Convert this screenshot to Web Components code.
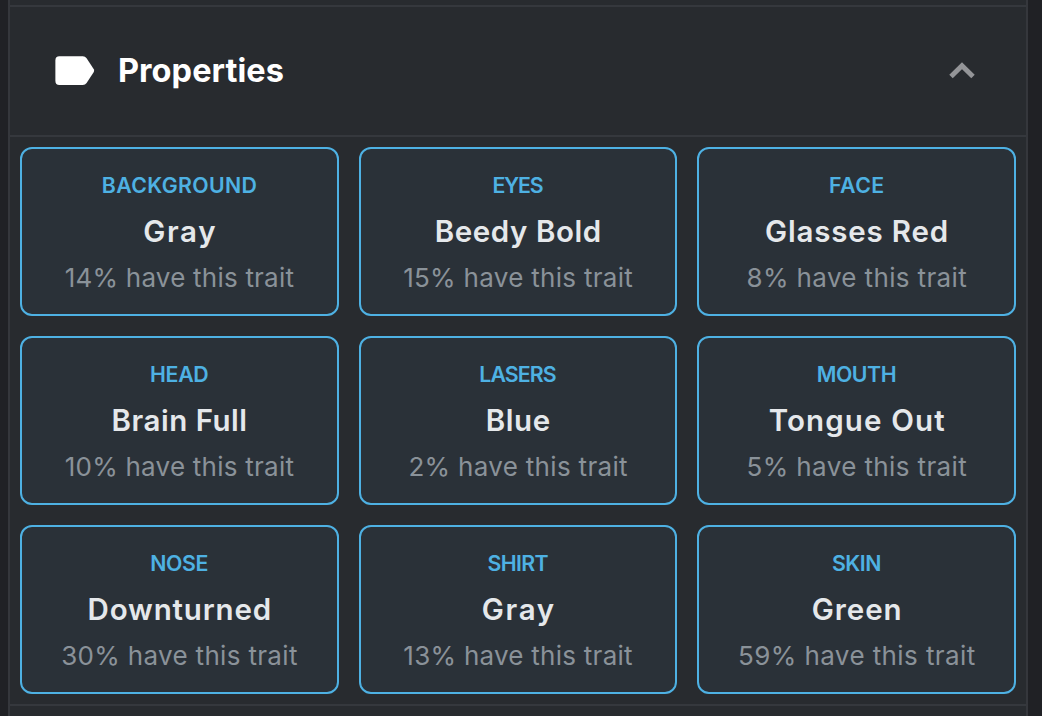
<!DOCTYPE html>
<html lang="en">
<head>
<meta charset="utf-8">
<title>Properties</title>
<style>
html,body{margin:0;height:100%;overflow:hidden;background:#202125}
body{font-family:Inter,"Open Sans",sans-serif}
</style>
</head>
<body>
<property-panel>
  <panel-header slot="header">Properties</panel-header>
</property-panel>
<script>
const attach = (el, html) => { el.attachShadow({mode:'open'}).innerHTML = html; };

// A single line of text tracked to a given advance width.
customElements.define('fit-text', class extends HTMLElement {
  connectedCallback() {
    if (this.shadowRoot) return;
    attach(this, `<style>:host{display:block;white-space:nowrap}span{display:inline-block}</style><span><slot></slot></span>`);
    const span = this.shadowRoot.querySelector('span');
    const n = this.textContent.length;
    const gap = (Number(this.getAttribute('width')) - span.getBoundingClientRect().width) / n;
    span.style.letterSpacing = gap + 'px';
    span.style.marginRight = -gap + 'px';
  }
});

customElements.define('panel-header', class extends HTMLElement {
  connectedCallback() {
    attach(this, `<style>
      :host{display:flex;align-items:center;box-sizing:border-box;height:130px;padding:0 51px 0 45px;border-bottom:2px solid #35383d;color:#fff}
      .tag{width:40px;height:30px;flex:none}
      h2{margin:0 auto 0 23px;font-size:32.5px;line-height:48px;font-weight:700}
      .chevron{width:26px;height:18px;flex:none}
    </style>
    <svg class="tag" viewBox="0 0 40 30"><path fill="#fff" d="M4.4 .2H27.8Q30.2 .2 31.6 2.2L38.8 13.3Q39.5 14.6 38.8 15.9L31.6 27Q30.2 29 27.8 29H4.4Q.4 29 .4 25V4.2Q.4 .2 4.4 .2Z"/></svg>
    <h2><fit-text width="166">${this.textContent}</fit-text></h2>
    <svg class="chevron" viewBox="0 0 26 18"><path fill="none" stroke="#949598" stroke-width="4.9" d="M2 14.6 13 3.7l11 10.9"/></svg>`);
  }
});

customElements.define('trait-card', class extends HTMLElement {
  connectedCallback() {
    const [type, tw, value, vw, share, sw] = this.data;
    attach(this, `<style>
      :host{display:flex;flex-direction:column;align-items:center;box-sizing:border-box;height:169px;padding-top:21px;border:2px solid #4eb1e3;border-radius:12px;background:#2a3138}
      .type{font-size:21.3px;line-height:30px;font-weight:560;color:#4eb1e3}
      .value{margin-top:8px;font-size:29.5px;line-height:46px;font-weight:600;color:#e5e8eb}
      .share{margin-top:6px;font-size:26px;line-height:36px;font-weight:400;color:#8a9299}
    </style>
    <fit-text class="type" width="${tw + 1.5}">${type}</fit-text>
    <fit-text class="value" width="${vw + 2}">${value}</fit-text>
    <fit-text class="share" width="${sw + 1.5}">${share}% have this trait</fit-text>`);
  }
});

customElements.define('property-panel', class extends HTMLElement {
  connectedCallback() {
    attach(this, `<style>
      :host{display:block;box-sizing:border-box;width:1020px;height:716px;margin-left:8px;padding-top:5px;border:solid #35373c;border-width:0 2px;background:#282b2f}
      section{border-top:2px solid #35383d;border-bottom:2px solid #35383d}
      .grid{display:grid;grid-template-columns:repeat(3,1fr);gap:20px;padding:10px}
    </style>
    <section><slot name="header"></slot><div class="grid"></div></section>`);
    const grid = this.shadowRoot.querySelector('.grid');
    for (const data of [
      ['BACKGROUND',154,'Gray',72,14,228],
      ['EYES',48.5,'Beedy Bold',165,15,228.5],
      ['FACE',54,'Glasses Red',182,8,219],
      ['HEAD',57,'Brain Full',134,10,228],
      ['LASERS',75,'Blue',63,2,218],
      ['MOUTH',78,'Tongue Out',175,5,219],
      ['NOSE',56.5,'Downturned',182.5,30,235],
      ['SHIRT',59,'Gray',72,13,228],
      ['SKIN',47.5,'Green',89,59,236]
    ]) {
      const card = document.createElement('trait-card');
      card.data = data;
      grid.append(card);
    }
  }
});
</script>
</body>
</html>
